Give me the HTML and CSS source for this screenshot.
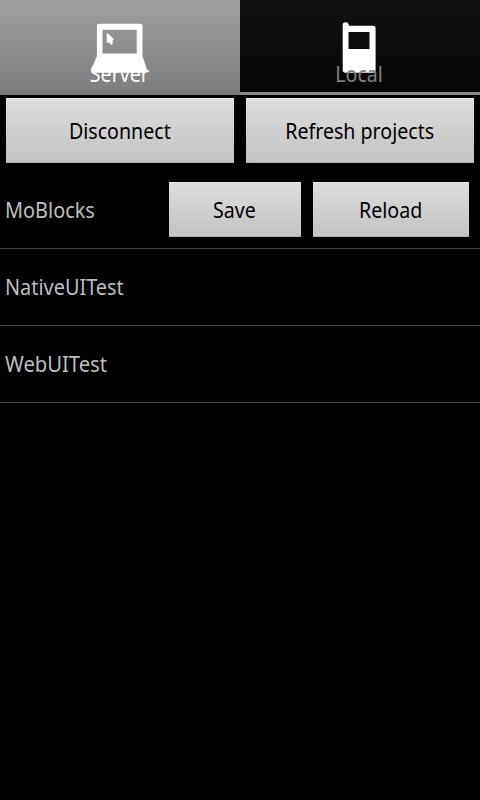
FILE: index.html
```html
<!DOCTYPE html>
<html lang="en">
<head>
<meta charset="utf-8">
<title>Projects</title>
<link rel="stylesheet" href="styles.css">
</head>
<body>
<nav class="tabs">
  <div class="tab tab-active">
    <svg class="icon" width="64" height="56" viewBox="88 20 64 56"><path fill="#fff" fill-rule="evenodd" d="M98.5 23.7H140.5Q142.5 23.7 142.5 26V56L147 69.8L148.8 70.3L148.5 71.8L146.5 72.8H94Q91 72.3 91.2 69.5L96.9 56V26Q96.9 23.7 98.5 23.7ZM102.5 29.7V53.5H136.7V29.7Z"/><path fill="#fff" d="M106.7 33L109 34.2L114 39.6L112.3 41L113 43.5L111 45L109.2 42.6L106.7 42.8Z"/></svg>
    <span class="label"><span class="text">Server</span></span>
  </div>
  <div class="tab">
    <svg class="icon" width="64" height="56" viewBox="328 20 64 56"><path fill="#fff" fill-rule="evenodd" d="M342.7 25Q342.7 22.3 345.6 22.3Q348.5 22.3 349 25.7H373Q375.6 25.7 375.6 28.5V70Q375.6 72.8 373 72.8H345.2Q342.7 72.8 342.7 70ZM348.5 32V49H369.5V32Z"/></svg>
    <span class="label"><span class="text">Local</span></span>
  </div>
</nav>
<div class="actions">
  <button class="button"><span class="text">Disconnect</span></button>
  <button class="button"><span class="text">Refresh projects</span></button>
</div>
<ul class="projects">
  <li class="project">
    <span class="name"><span class="text">MoBlocks</span></span>
    <button class="button save"><span class="text">Save</span></button>
    <button class="button reload"><span class="text">Reload</span></button>
  </li>
  <li class="project"><span class="name"><span class="text">NativeUITest</span></span></li>
  <li class="project"><span class="name"><span class="text wide">WebUITest</span></span></li>
</ul>
</body>
</html>
```
FILE: styles.css
```css
* { box-sizing: border-box; }
body {
  margin: 0;
  background: #000;
  font-family: "Noto Sans", sans-serif;
  font-size: 21.5px;
  line-height: 30px;
  color: #bebebe;
}
.text {
  display: inline-block;
  transform: scaleX(.912);
  white-space: nowrap;
}
.tabs { display: flex; height: 95px; }
.tab {
  position: relative;
  width: 240px;
  padding-top: 20px;
  background: linear-gradient(#121212, #050505);
  border-bottom: 3px solid #898989;
  color: #808080;
  text-align: center;
}
.tab-active {
  background: linear-gradient(#a0a0a0, #7c7c7c);
  border-bottom: 0;
  color: #fff;
}
.icon { display: block; margin: 0 auto; }
.label { position: absolute; left: 0; right: 1px; top: 59px; }
.actions { display: flex; gap: 12px; padding: 3px 6px 0; }
.button {
  flex: 1;
  height: 65px;
  padding: 0 1px 0 0;
  border: 0;
  border-radius: 1px;
  background: linear-gradient(#dedede, #c2c2c2);
  box-shadow: inset 0 1px #e9e9e9, inset 0 -1px #b0b0b0;
  color: #000;
  font: inherit;
}
.projects { margin: 9px 0 0; padding: 0; list-style: none; }
.project {
  display: flex;
  align-items: center;
  height: 77px;
  padding: 0 11px 0 5px;
  border-bottom: 1px solid #424242;
}
.name { flex: 1; }
.name .text { transform: scaleX(.925); transform-origin: left; }
.name .wide { transform: scaleX(.94); }
.project .button {
  flex: none;
  height: 55px;
  margin-bottom: 2px;
  padding-top: 2px;
}
.project .save { width: 132px; margin-right: 12px; }
.project .reload { width: 156px; }
```
